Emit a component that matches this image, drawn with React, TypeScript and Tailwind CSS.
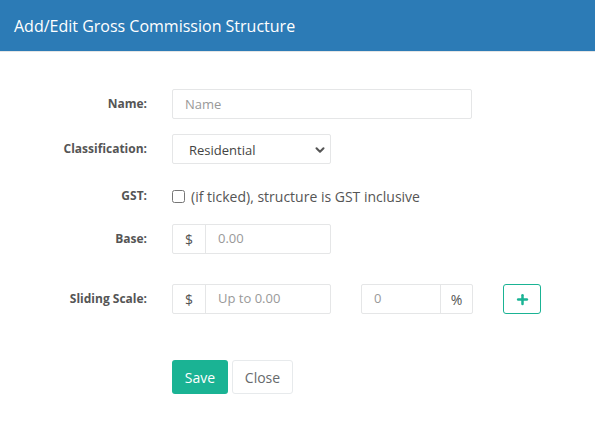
import { FiPlus, FiChevronDown } from 'react-icons/fi';

const font = { fontFamily: '"Open Sans", "Liberation Sans", sans-serif' };

function Label({ children }: { children: React.ReactNode }) {
    return (
        <div className="w-[147px] shrink-0 text-right text-[12px] font-bold text-[#555]">{children}</div>
    );
}

export default function App() {
    return (
        <div className="w-[595px] h-[436px] bg-white text-[#555]" style={font}>
            <div className="h-[52px] bg-[#2c7bb6] border-b border-[#e5e5e5] flex items-center px-[14px]">
                <h3 className="text-[16px] text-white leading-none">Add/Edit Gross Commission Structure</h3>
            </div>

            <div className="flex flex-col">
                <div className="flex items-center h-[30px] mt-[37px]">
                    <Label>Name:</Label>
                    <input
                        type="text"
                        placeholder="Name"
                        className="ml-[25px] w-[300px] h-[30px] px-[12px] text-[13px] border border-[#e5e6e7] rounded-[2px] placeholder-[#999] text-[#555] focus:outline-none"
                    />
                </div>

                <div className="flex items-center h-[30px] mt-[15px]">
                    <Label>Classification:</Label>
                    <div className="ml-[25px] relative w-[159px] h-[30px] border border-[#e5e6e7] rounded-[2px] flex items-center pl-[16px] pt-[3px] text-[13px] text-[#444]">
                        Residential
                        <FiChevronDown className="absolute right-[3px] top-[8px] w-[14px] h-[14px] text-[#555]" strokeWidth={3.5} />
                    </div>
                </div>

                <div className="flex items-center h-[20px] mt-[22px]">
                    <Label>GST:</Label>
                    <label className="ml-[25px] flex items-center gap-[6px] text-[14px] text-[#555]">
                        <input type="checkbox" className="w-[13px] h-[13px] m-0" />
                        <span>(if ticked), structure is GST inclusive</span>
                    </label>
                </div>

                <div className="flex items-center h-[30px] mt-[18px]">
                    <Label>Base:</Label>
                    <div className="ml-[25px] flex h-[30px] w-[159px] border border-[#e5e6e7] rounded-[2px]">
                        <span className="w-[33px] flex items-center justify-center border-r border-[#e5e6e7] text-[14px] text-[#555]">$</span>
                        <input
                            type="text"
                            placeholder="0.00"
                            className="flex-1 min-w-0 px-[12px] text-[13px] placeholder-[#999] focus:outline-none"
                        />
                    </div>
                </div>

                <div className="flex items-center h-[30px] mt-[30px]">
                    <Label>Sliding Scale:</Label>
                    <div className="ml-[25px] flex h-[30px] w-[159px] border border-[#e5e6e7] rounded-[2px]">
                        <span className="w-[33px] flex items-center justify-center border-r border-[#e5e6e7] text-[14px] text-[#555]">$</span>
                        <input
                            type="text"
                            placeholder="Up to 0.00"
                            className="flex-1 min-w-0 px-[12px] text-[13px] placeholder-[#999] focus:outline-none"
                        />
                    </div>
                    <div className="ml-[30px] flex h-[30px] w-[112px] border border-[#e5e6e7] rounded-[2px]">
                        <input
                            type="text"
                            placeholder="0"
                            className="flex-1 min-w-0 px-[12px] text-[13px] placeholder-[#999] focus:outline-none"
                        />
                        <span className="w-[32px] flex items-center justify-center border-l border-[#e5e6e7] text-[14px] text-[#555]">%</span>
                    </div>
                    <button className="ml-[30px] w-[38px] h-[30px] border border-[#1ab394] rounded-[3px] flex items-center justify-center text-[#1ab394]">
                        <FiPlus className="w-[15px] h-[15px]" strokeWidth={4} />
                    </button>
                </div>

                <div className="flex items-center mt-[46px] pl-[172px] gap-[4px]">
                    <button className="h-[34px] w-[56px] bg-[#1ab394] text-white text-[14px] rounded-[3px]">Save</button>
                    <button className="h-[34px] w-[61px] bg-white border border-[#e7eaec] text-[#676a6c] text-[14px] rounded-[3px]">Close</button>
                </div>
            </div>
        </div>
    );
}
